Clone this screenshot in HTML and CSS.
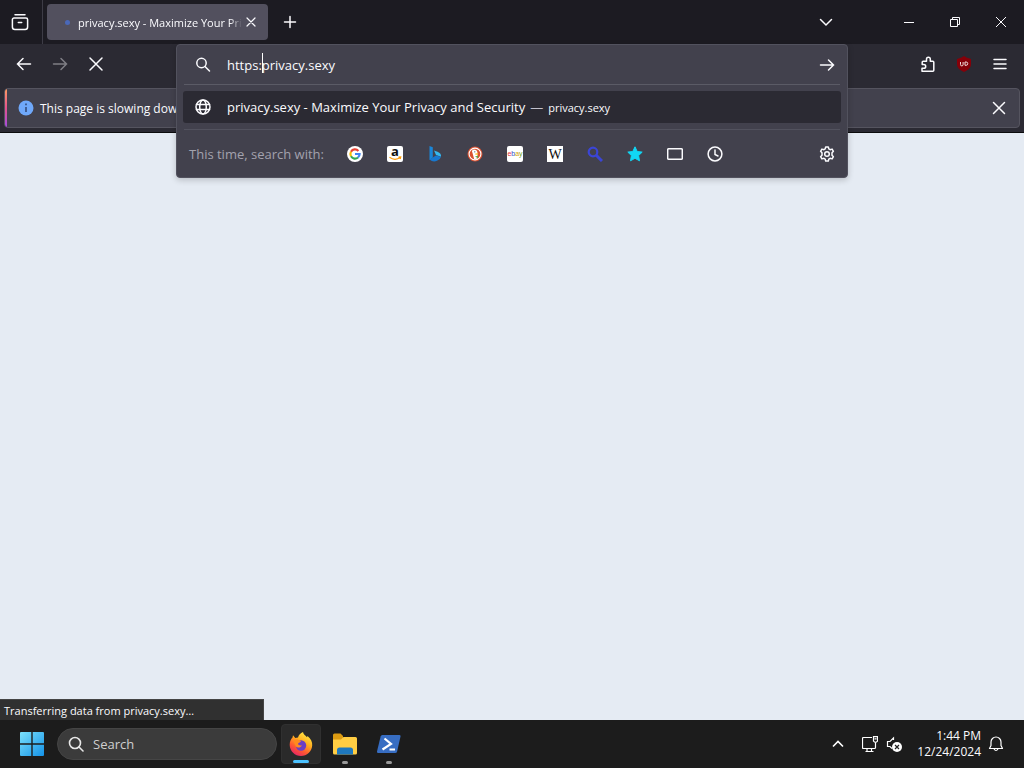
FILE: index.html
```html
<!DOCTYPE html>
<html lang="en">
<head>
<meta charset="utf-8">
<title>privacy.sexy - Maximize Your Privacy and Security</title>
<link rel="stylesheet" href="styles.css">
</head>
<body>
<header class="browser">
  <div class="tabbar">
    <button class="icon-btn view-btn" aria-label="Recent browsing"><svg class="icon-lg" viewBox="0 0 18 18"><path d="M4 1.800h10M3 5h12a1.600 1.600 0 0 1 1.600 1.600v7.300a2.500 2.500 0 0 1-2.500 2.500H3.900a2.500 2.500 0 0 1-2.500-2.500V6.600A1.600 1.600 0 0 1 3 5zM7.300 9.400h3.400"/></svg></button>
    <div class="tab">
      <span class="tab-dot"></span>
      <span class="tab-title">privacy.sexy - Maximize Your Privacy and Security</span>
      <button class="tab-close" aria-label="Close tab"><svg class="icon-sm" viewBox="0 0 10 10"><path d="M1 1l8 8M9 1l-8 8"/></svg></button>
    </div>
    <button class="icon-btn new-tab" aria-label="New tab"><svg class="icon" viewBox="0 0 16 16"><path d="M8 2.500v11M2.500 8h11"/></svg></button>
    <div class="window-controls">
      <button class="icon-btn all-tabs" aria-label="List all tabs"><svg class="icon" viewBox="0 0 16 16"><path d="M2.500 5.500L8 11l5.500-5.500"/></svg></button>
      <button class="win-btn" aria-label="Minimize"><svg class="icon-thin" viewBox="0 0 12 12"><path d="M1 6.500h10"/></svg></button>
      <button class="win-btn" aria-label="Restore"><svg class="icon-thin" viewBox="0 0 12 12"><path d="M1.500 3.500h7v7h-7zM3.500 3.500v-2h7v7h-2"/></svg></button>
      <button class="win-btn" aria-label="Close"><svg class="icon-thin" viewBox="0 0 12 12"><path d="M1 1l10 10M11 1L1 11"/></svg></button>
    </div>
  </div>

  <div class="toolbar">
    <nav class="nav-buttons">
      <button class="icon-btn" aria-label="Back"><svg class="icon" viewBox="0 0 16 16"><path d="M14.500 8H1.500M7 2.500L1.500 8 7 13.500"/></svg></button>
      <button class="icon-btn" aria-label="Forward" disabled><svg class="icon" viewBox="0 0 16 16"><path d="M1.500 8h13M9 2.500L14.500 8 9 13.500"/></svg></button>
      <button class="icon-btn" aria-label="Stop"><svg class="icon" viewBox="0 0 16 16"><path d="M2 2l12 12M14 2L2 14"/></svg></button>
    </nav>
    <div class="url-slot">
      <div class="urlbar">
        <div class="url-row">
          <svg class="icon url-icon" viewBox="0 0 16 16"><circle cx="6.500" cy="6" r="4.700"/><path d="M10 9.500l4.500 4.500"/></svg>
          <div class="url-field">
            <input class="url-input" aria-label="Search or enter address" value="https:privacy.sexy">
            <span class="caret-track" aria-hidden="true"><span class="caret-before">https:</span><span class="caret"></span></span>
          </div>
          <button class="go-btn" aria-label="Go"><svg class="icon" viewBox="0 0 16 16"><path d="M1.500 8h13M9.500 3L14.500 8l-5 5"/></svg></button>
        </div>
        <a class="result" href="#">
          <svg class="icon url-icon" viewBox="0 0 16 16"><circle cx="8" cy="8" r="7"/><ellipse cx="8" cy="8" rx="3.300" ry="7"/><path d="M1.500 5.500h13M1.500 10.500h13"/></svg>
          <span>privacy.sexy - Maximize Your Privacy and Security</span>
          <span class="dash">—</span>
          <span class="result-url">privacy.sexy</span>
        </a>
        <div class="engines">
          <span class="engines-label">This time, search with:</span>
          <div class="engine-list">
          <button class="engine" aria-label="Google"><svg viewBox="0 0 16 16"><circle cx="8" cy="8" r="8" fill="#fff"/><g fill="none" stroke-width="2.200"><path stroke="#ea4335" d="M4 5.700A4.600 4.600 0 0 1 11.400 4.900"/><path stroke="#fbbc05" d="M4 5.700a4.700 4.700 0 0 0 0 4.600"/><path stroke="#34a853" d="M4 10.300A4.600 4.600 0 0 0 11 11.500"/><path stroke="#4285f4" d="M11 11.500A4.700 4.700 0 0 0 12.600 8H8"/></g></svg></button>
          <button class="engine" aria-label="Amazon"><svg viewBox="0 0 16 16"><rect width="16" height="16" rx="2" fill="#fff"/><text x="8" y="10" class="logo-amazon">a</text><path d="M2.500 11.300q5.500 4 11 0M11.500 11.200l2.200-.2-.5 2" fill="none" stroke="#f90" stroke-width="1.200"/></svg></button>
          <button class="engine" aria-label="Bing"><svg viewBox="0 0 16 16"><path fill="#1a86d8" d="M2.500 0l3.300 1.200v10.300L2.500 14z"/><path fill="#35b8ef" d="M7 4.500l3.500 1.300q4 1.500 3.500 5L9 8.900z"/><path fill="#1878d0" d="M2.500 13.500L9 9.500l5 1.300q-.4 2.500-4 4-4 1.700-7.500-1.300z"/></svg></button>
          <button class="engine" aria-label="DuckDuckGo"><svg viewBox="0 0 16 16"><circle cx="8" cy="8" r="7.500" fill="#d95030"/><circle cx="8" cy="8" r="5.900" fill="none" stroke="#fff" stroke-width="1.100"/><path d="M4.800 4.800l2-1.400c2.500.2 3.800 1.500 3.700 3.600v5.500l-3.300.7L5.500 7z" fill="#fff"/><path d="M8.300 7.500l3-.3-.4 1.300-2.500.3z" fill="#fdb913"/><path d="M8 10.500l3-.7v2.400z" fill="#58a846"/><circle cx="7.800" cy="5.800" r=".6" fill="#345"/></svg></button>
          <button class="engine" aria-label="eBay"><svg viewBox="0 0 16 16"><rect width="16" height="16" rx="2" fill="#fff"/><text x="8" y="10" class="logo-ebay"><tspan fill="#e53238">e</tspan><tspan fill="#304cc8">b</tspan><tspan fill="#d5a000">a</tspan><tspan fill="#76a516">y</tspan></text></svg></button>
          <button class="engine" aria-label="Wikipedia"><svg viewBox="0 0 16 16"><rect width="16" height="16" fill="#fff"/><text x="8" y="13" class="logo-wiki">W</text></svg></button>
          <button class="engine" aria-label="Search engine"><svg viewBox="0 0 16 16" fill="none" stroke="#3b45d6" stroke-width="2.200"><circle cx="6" cy="6" r="4.300"/><path d="M9 9l6 6" stroke-width="3"/></svg></button>
          <button class="engine" aria-label="Bookmarks"><svg viewBox="0 0 16 16"><path fill="#11d7f5" stroke="#11d7f5" stroke-linejoin="round" d="M8 .8l2.200 4.700 5 .6-3.600 3.500.9 5.200L8 12.300l-4.500 2.500.9-5.200L.8 6.100l5-.6z"/></svg></button>
          <button class="engine" aria-label="Tabs"><svg class="line" viewBox="0 0 16 16"><rect x=".7" y="2.700" width="14.600" height="10.600" rx="1"/></svg></button>
          <button class="engine" aria-label="History"><svg class="line" viewBox="0 0 16 16"><circle cx="8" cy="8" r="6.900"/><path d="M8 4v4.500l3 1.500"/></svg></button>
          </div>
          <button class="engine settings" aria-label="Search settings"><svg class="line" viewBox="0 0 16 16"><path stroke-linejoin="round" d="M6.700.9h2.600l.5 2 1.300.8 2-.6 1.300 2.200-1.400 1.500v2.400l1.400 1.500-1.300 2.200-2-.6-1.300.8-.5 2H6.700l-.5-2-1.300-.8-2 .6-1.300-2.200L3 9.200V6.800L1.600 5.300l1.300-2.200 2 .6 1.300-.8z"/><circle cx="8" cy="8" r="2.300"/></svg></button>
        </div>
      </div>
    </div>
    <div class="tool-buttons">
      <button class="icon-btn" aria-label="Extensions"><svg class="icon" viewBox="0 0 16 16"><path stroke-linejoin="round" d="M2 15.200h10.800a1 1 0 0 0 1-1V6.300a1 1 0 0 0-1-1H10.300V3.200a1.900 1.900 0 0 0-3.800 0v2.100H3.200a1 1 0 0 0-1 1v2.200h1.600a1.900 1.900 0 0 1 0 3.800H2z"/></svg></button>
      <button class="icon-btn" aria-label="uBlock Origin"><svg class="ublock" viewBox="0 0 16 16"><path fill="#850009" d="M8 0l2.500 1.500L15 3v5c0 4-3 6-7 8-4-2-7-4-7-8V3l4.500-1.500z"/><path d="M4.500 6v2.600a1 1 0 0 0 2.600 0V6M9 6v3.300h1.100a1.600 1.600 0 0 0 0-3.300H9" fill="none" stroke="#f0dcdc"/></svg></button>
      <button class="icon-btn" aria-label="Open application menu"><svg class="icon" viewBox="0 0 16 16"><path d="M2 3.500h12M2 8h12M2 12.500h12"/></svg></button>
    </div>
  </div>

  <div class="notice" role="status">
    <span class="info"><svg viewBox="0 0 16 16"><circle cx="8" cy="8" r="7.500" fill="#6fa8fa"/><path d="M8 7v5M8 3.500v1.800" stroke="#344b7b" stroke-width="1.600"/></svg></span>
    <span class="notice-text">This page is slowing down Firefox.</span>
    <button class="icon-btn notice-close" aria-label="Dismiss"><svg class="icon" viewBox="0 0 16 16"><path d="M2.500 2.500l11 11M13.500 2.500l-11 11"/></svg></button>
  </div>
</header>

<main class="page"><div class="status">Transferring data from privacy.sexy…</div></main>

<footer class="taskbar">
  <button class="start" aria-label="Start"><svg viewBox="0 0 24 24"><defs><linearGradient id="win" x1="0" y1="0" x2="1" y2="1"><stop offset="0" stop-color="#7be1fb"/><stop offset="1" stop-color="#1492e8"/></linearGradient></defs><path fill="url(#win)" d="M1 0h10.300v11.300H0V1q0-1 1-1zM12.700 0H23q1 0 1 1v10.300H12.700zM0 12.700h11.300V24H1q-1 0-1-1zM12.700 12.700H24V23q0 1-1 1H12.700z"/></svg></button>
  <label class="search"><svg viewBox="0 0 16 16"><circle cx="7" cy="7" r="5.500"/><path d="M11 11l4 4"/></svg><input type="search" aria-label="Search" placeholder="Search"></label>
  <div class="apps">
    <button class="app active" aria-label="Firefox"><svg viewBox="0 0 24 24"><defs><linearGradient id="fox" x1=".8" y1="0" x2=".25" y2="1"><stop offset="0" stop-color="#fff24a"/><stop offset=".4" stop-color="#ffad20"/><stop offset=".7" stop-color="#ff5930"/><stop offset="1" stop-color="#e5206a"/></linearGradient></defs><path fill="url(#fox)" d="M14 0c.3 2 2 3.300 4 5.200l.5-1.200C22 7 23.500 10 23.200 13.500 22.700 19.500 18 24 12 24S.8 19.200.7 13C.6 9.500 2 7 3.500 5.500L4 3.200 6.300 6 9 5.600C9.500 3 11.500 1 14 0z"/><circle cx="12" cy="13.500" r="5.200" fill="#6b3ec6"/><path fill="#ff8a1d" d="M4.500 8.500c3-1.600 5-1 7.500.8-.5 1.300-2.500 1.200-3 2.500.3 1.500 2 2 4 1.400-1.300 2.600-4.300 3-6.300 1.300-1-1.800-1.600-4-2.200-6z"/></svg></button>
    <button class="app" aria-label="File Explorer"><svg viewBox="0 0 24 24"><path fill="#dc9b12" d="M0 3q0-1.500 1.500-1.500h6L10 4v5H0z"/><path fill="#ffcd43" d="M0 7.500h8L10.500 5h12q1.500 0 1.500 1.500V21q0 1.500-1.500 1.500h-21Q0 22.500 0 21z"/><path fill="#1e78be" d="M4 22.500V18q0-2.500 2.500-2.500h11Q20 15.500 20 18v4.500z"/></svg></button>
    <button class="app" aria-label="PowerShell"><svg viewBox="0 0 24 24"><path fill="#376dc2" d="M5.300 3h17q1.500 0 1.200 1.500l-3.400 15Q19.700 21 18.200 21h-17q-1.500 0-1.200-1.500l3.600-15Q4 3 5.300 3z"/><path d="M7.500 6.500l6.500 5.300-8.500 5.700M12.500 17.500h5.500" fill="none" stroke="#fff" stroke-width="2.200"/></svg></button>
  </div>
  <div class="tray">
    <button class="tray-btn" aria-label="Show hidden icons"><svg viewBox="0 0 16 16"><path d="M3 10.500l5-5 5 5" stroke-width="1.600"/></svg></button>
    <button class="tray-btn network" aria-label="Network"><svg viewBox="0 0 16 16"><path d="M10 1.500H1.500q-1 0-1 1v9q0 1 1 1h11q1 0 1-1V7M5 12.500v3M9.500 12.500v3M3.500 15.500h8M11.500.6h4v4.600q-2 2.300-4 0zM12.500 2.800h2"/></svg></button>
    <button class="tray-btn" aria-label="Volume"><svg viewBox="0 0 16 16"><path d="M7.500 4V2L4 5.500H1.500v5H4l2 2"/><circle cx="11" cy="11" r="5" fill="#fff" stroke="none"/><path stroke="#222" d="M9 9l4 4M13 9l-4 4"/></svg></button>
    <time class="clock" datetime="2024-12-24T13:44"><span>1:44 PM</span><span>12/24/2024</span></time>
    <button class="tray-btn" aria-label="Notifications"><svg viewBox="0 0 16 16"><path stroke-linejoin="round" d="M1.500 12.500h13L13 9.500V6A5 5 0 0 0 3 6v3.500zM6 13q2 3 4 0"/></svg></button>
  </div>
</footer>
</body>
</html>
```
FILE: styles.css
```css
* { box-sizing: border-box; }

body {
  margin: 0;
  min-height: 100vh;
  display: flex;
  flex-direction: column;
  font-family: "Open Sans", "Noto Sans", sans-serif;
  font-size: 12px;
  color: #fbfbfe;
  background: #e5ebf3;
}

button {
  display: flex;
  align-items: center;
  justify-content: center;
  flex: none;
  margin: 0;
  padding: 0;
  border: 0;
  background: none;
  color: inherit;
}

input { font: inherit; color: inherit; }

svg { display: block; flex: none; }

.icon, .icon-lg, .icon-sm, .icon-thin, .line {
  fill: none;
  stroke: currentColor;
  stroke-width: 1.5;
  stroke-linecap: round;
}
.icon { width: 16px; height: 16px; }
.icon-lg { width: 18px; height: 18px; }
.icon-sm { width: 10px; height: 10px; stroke-width: 1.2; }
.icon-thin { width: 12px; height: 12px; stroke-width: 1; stroke-linecap: butt; }

.icon-btn { width: 36px; height: 36px; }
.icon-btn:disabled { opacity: .4; }

/* Browser chrome */
.browser { background: #2b2a33; border-bottom: 1px solid #0c0c0d; }

.tabbar {
  display: flex;
  align-items: center;
  height: 44px;
  background: #1c1b22;
}
.view-btn {
  width: 43px;
  height: 44px;
  padding-right: 3px;
  border-right: 1px solid #3d3c46;
}
.tab {
  display: flex;
  align-items: center;
  width: 221px;
  height: 36px;
  margin-left: 4px;
  padding: 0 8px 0 18px;
  border-radius: 4px;
  background: #52505e;
}
.tab-dot {
  width: 5px;
  height: 5px;
  margin-right: 8px;
  border-radius: 50%;
  background: #4a68b8;
}
.tab-title {
  flex: 1;
  overflow: hidden;
  font-size: 11px;
  white-space: nowrap;
  mask-image: linear-gradient(to left, transparent, #000 12px);
}
.tab-close { width: 18px; height: 20px; }
.new-tab { margin-left: 4px; }
.window-controls { display: flex; align-items: center; margin-left: auto; }
.all-tabs { margin-right: 42px; }
.win-btn { width: 46px; height: 44px; }

.toolbar { display: flex; height: 40px; align-items: center; }
.nav-buttons { display: flex; width: 176px; padding-left: 6px; }
.url-slot { position: relative; flex: 1; align-self: stretch; }
.tool-buttons { display: flex; justify-content: flex-end; width: 176px; padding-right: 6px; }
.ublock { width: 16px; height: 16px; }

/* Address bar with its open result list */
.urlbar {
  position: absolute;
  z-index: 2;
  top: 0;
  left: 0;
  right: 0;
  padding: 0 7px;
  border: 1px solid #52525e;
  border-radius: 4px;
  background: #42414d;
  box-shadow: 0 2px 6px rgba(0, 0, 0, .2);
  font-size: 13px;
}
.url-row { display: flex; align-items: center; height: 40px; border-bottom: 1px solid #5b5b66; }
.url-icon { margin: 0 16px 0 12px; }
.url-row .url-icon { margin-left: 11px; }
.url-field { position: relative; flex: 1; }
.url-input {
  display: block;
  width: 100%;
  height: 24px;
  padding: 0;
  border: 0;
  outline: 0;
  background: none;
}
.caret-track {
  position: absolute;
  top: 0;
  left: 0;
  display: flex;
  height: 20px;
  pointer-events: none;
}
.caret-before { visibility: hidden; }
.caret { width: 1px; background: #fff; }
.go-btn { width: 26px; height: 32px; }

.result {
  display: flex;
  align-items: center;
  height: 32px;
  margin: 6px -1px;
  border-radius: 3px;
  background: #2b2a33;
  color: inherit;
  text-decoration: none;
  white-space: nowrap;
}
.dash { margin: 0 5px; color: #c2c1cc; }
.result-url { font-size: 11px; }

.engines {
  display: flex;
  align-items: center;
  height: 48px;
  padding-left: 5px;
  border-top: 1px solid #52525e;
}
.engines-label { width: 146px; color: #a3a2ad; white-space: nowrap; }
.engine-list { display: flex; }
.engine { width: 40px; height: 40px; }
.engine svg { width: 16px; height: 16px; }
.settings { width: 26px; margin-left: auto; }
.logo-amazon { font: bold 13px "Open Sans", sans-serif; text-anchor: middle; fill: #111; }
.logo-ebay { font: 7px "Liberation Sans", sans-serif; text-anchor: middle; }
.logo-wiki { font: 14px "Liberation Serif", serif; text-anchor: middle; fill: #111; }

.notice {
  position: relative;
  display: flex;
  align-items: center;
  height: 40px;
  margin: 4px;
  padding-left: 13px;
  overflow: hidden;
  border: 1px solid #55545f;
  border-radius: 4px;
  background: #42414d;
}
.notice::before {
  content: "";
  position: absolute;
  inset: 0 auto 0 0;
  width: 2px;
  background: linear-gradient(#ff9a62, #e4528d, #a44ce0);
}
.info svg { width: 16px; height: 16px; }
.notice-text { margin-left: 6px; }
.notice-close { margin-left: auto; margin-right: 2px; }

/* Page area */
.page { display: flex; flex: 1; align-items: flex-end; }
.status {
  width: 264px;
  height: 21px;
  padding-left: 4px;
  border: 1px solid #444;
  border-width: 1px 1px 0 0;
  background: #303030;
  font-size: 11px;
  line-height: 22px;
}

/* Taskbar */
.taskbar { display: flex; align-items: center; height: 48px; background: #1c1c1c; }
.start { width: 40px; height: 40px; margin-left: 12px; }
.start svg { width: 24px; height: 24px; }
.search {
  display: flex;
  align-items: center;
  width: 220px;
  height: 32px;
  margin-left: 5px;
  padding: 0 12px 0 10px;
  border: 1px solid #454545;
  border-radius: 16px;
  background: #3b3b3b;
  font-size: 13px;
}
.search svg { width: 16px; height: 16px; fill: none; stroke: #e8e8e8; stroke-width: 1.6; stroke-linecap: round; }
.search input { flex: 1; min-width: 0; margin-left: 8px; padding: 0 1px; border: 0; outline: 0; background: none; }
.search input::placeholder { color: #cfcfcf; opacity: 1; }
.apps { display: flex; gap: 4px; margin-left: 4px; }
.app { position: relative; width: 40px; height: 40px; border-radius: 4px; }
.app svg { width: 24px; height: 24px; }
.app::after {
  content: "";
  position: absolute;
  bottom: 0;
  left: 50%;
  width: 6px;
  height: 3px;
  margin-left: -3px;
  border-radius: 2px;
  background: #9a9a9a;
}
.active { background: #2a2a2a; border: 1px solid #303030; }
.active::after { width: 16px; margin-left: -8px; background: #4cc2ff; }
.tray { display: flex; align-items: center; margin-left: auto; padding-right: 16px; }
.tray-btn { width: 24px; height: 40px; }
.tray-btn svg { width: 16px; height: 16px; fill: none; stroke: #fff; stroke-width: 1.2; }
.network { margin-left: 8px; }
.clock { display: flex; flex-direction: column; align-items: flex-end; margin: 0 3px 0 11px; font-size: 12px; line-height: 16px; }
```
